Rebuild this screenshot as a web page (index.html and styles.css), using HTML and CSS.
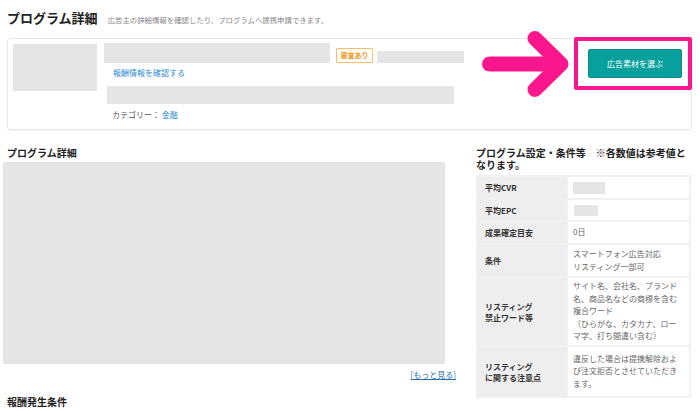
FILE: index.html
```html
<!DOCTYPE html>
<html lang="ja">
<head>
    <meta charset="UTF-8">
    <meta name="viewport" content="width=device-width, initial-scale=1.0">
    <title>プログラム詳細</title>
    <link rel="stylesheet" href="styles.css">
</head>
<body>
    <header class="page-head">
        <h1>プログラム詳細</h1>
        <p class="lead">広告主の詳細情報を確認したり、プログラムへ提携申請できます。</p>
    </header>

    <section class="card">
        <div class="thumb"></div>
        <div class="info">
            <div class="name-row">
                <div class="ph ph-name"></div>
                <span class="badge">審査あり</span>
                <div class="ph ph-id"></div>
            </div>
            <a class="link reward-link" href="#">報酬情報を確認する</a>
            <div class="ph ph-desc"></div>
            <p class="category">カテゴリー： <a class="link" href="#">金融</a></p>
        </div>
        <button class="select-btn" type="button">広告素材を選ぶ</button>

        <!-- annotation -->
        <div class="highlight"></div>
        <svg class="arrow" width="100" height="72" viewBox="0 0 100 72">
            <g fill="none" stroke="#fa168c" stroke-width="15" stroke-linecap="round" stroke-linejoin="round">
                <path d="M15.5 36H85"/>
                <path d="M61 10.5L87 36L61 61.5"/>
            </g>
        </svg>
    </section>

    <div class="columns">
        <div class="col-main">
            <h2 class="sec-title">プログラム詳細</h2>
            <div class="ph ph-body"></div>
            <div class="more"><a class="link" href="#">[もっと見る]</a></div>
            <h2 class="sec-title reward-title">報酬発生条件</h2>
        </div>
        <div class="col-side">
            <h2 class="sec-title side-title">プログラム設定・条件等　※各数値は参考値となります。</h2>
            <table class="spec">
                <tr class="r-cvr">
                    <th>平均CVR</th>
                    <td><div class="ph ph-cvr"></div></td>
                </tr>
                <tr class="r-epc">
                    <th>平均EPC</th>
                    <td><div class="ph ph-epc"></div></td>
                </tr>
                <tr class="r-days">
                    <th>成果確定目安</th>
                    <td>0日</td>
                </tr>
                <tr class="r-cond">
                    <th>条件</th>
                    <td>スマートフォン広告対応<br>リスティング一部可</td>
                </tr>
                <tr class="r-ng">
                    <th>リスティング<br>禁止ワード等</th>
                    <td>サイト名、会社名、ブランド<br>名、商品名などの商標を含む<br>複合ワード<br>（ひらがな、カタカナ、ロー<br>マ字、打ち間違い含む）</td>
                </tr>
                <tr class="r-note">
                    <th>リスティング<br>に関する注意点</th>
                    <td>違反した場合は提携解除およ<br>び注文拒否とさせていただき<br>ます。</td>
                </tr>
            </table>
        </div>
    </div>
</body>
</html>
```

FILE: styles.css
```css
body {
    margin: 0;
    font-family: "Noto Sans CJK JP", "Noto Sans", sans-serif;
    color: #333;
    background-color: #fff;
}
.page-head {
    display: flex;
    align-items: baseline;
    padding: 10px 7px 0;
}
.page-head h1 {
    margin: 0;
    font-size: 13px;
    line-height: 16px;
    font-weight: 700;
    color: #222;
}
.lead {
    margin: 0 0 0 10px;
    font-size: 7.4px;
    color: #888;
}
.link {
    color: #2d8bd2;
    text-decoration: none;
}
.ph {
    background-color: #e6e5e6;
}

/* card */
.card {
    position: relative;
    display: flex;
    align-items: flex-start;
    margin: 12px 8px 0 7px;
    padding: 5px 9px 8px 5px;
    border: 1px solid #e6e6e6;
    border-radius: 3px;
    box-shadow: 0 1px 1px rgba(0,0,0,0.04);
}
.thumb {
    width: 84px;
    height: 47px;
    background-color: #e6e5e6;
}
.info {
    margin-left: 7px;
    margin-top: -1px;
    display: flex;
    flex-direction: column;
    align-items: flex-start;
}
.name-row {
    display: flex;
    align-items: flex-end;
}
.ph-name {
    width: 226px;
    height: 20px;
}
.badge {
    margin-left: 6px;
    width: 37px;
    height: 15px;
    box-sizing: border-box;
    border: 1px solid #f7c067;
    border-radius: 1px;
    font-size: 7px;
    line-height: 13px;
    text-align: center;
    color: #f39a1f;
    font-weight: 700;
}
.ph-id {
    margin-left: 4px;
    width: 87px;
    height: 12px;
}
.reward-link {
    margin: 4px 0 0 9px;
    font-size: 8px;
    line-height: 12px;
}
.ph-desc {
    margin: 7px 0 0 3px;
    width: 347px;
    height: 18px;
}
.category {
    margin: 5px 0 0 8px;
    font-size: 8px;
    line-height: 12px;
    color: #555;
}
.select-btn {
    margin-left: auto;
    margin-top: 5px;
    width: 94px;
    height: 29px;
    padding: 0;
    border: 1px solid #0a8e89;
    border-radius: 2px;
    background-color: #07a09c;
    color: #fff;
    font-family: inherit;
    font-size: 8px;
}
.highlight {
    position: absolute;
    left: 566px;
    top: -2px;
    width: 118px;
    height: 53px;
    box-sizing: border-box;
    border: 4px solid #fa168c;
    border-radius: 2px;
}
.arrow {
    position: absolute;
    left: 466px;
    top: -11px;
}

/* lower columns */
.columns {
    display: flex;
    align-items: flex-start;
    gap: 20px;
    margin-top: 17px;
    padding-left: 3px;
}
.col-main {
    width: 453px;
}
.sec-title {
    margin: 0 0 0 4px;
    font-size: 10px;
    line-height: 12px;
    font-weight: 700;
    color: #222;
}
.ph-body {
    margin-top: 3px;
    width: 442px;
    height: 202px;
}
.more {
    margin-top: 5px;
    text-align: right;
    font-size: 8px;
    line-height: 12px;
}
.more .link {
    color: #2a6fa8;
    text-decoration: underline;
}
.reward-title {
    margin-top: 15px;
}
.col-side {
    width: 215px;
}
.side-title {
    margin: 0;
}
.spec {
    margin-top: 4px;
    width: 215px;
    border-collapse: collapse;
    border: 2px solid #f1f1f1;
    font-size: 8px;
}
.spec th,
.spec td {
    border: 2px solid #f1f1f1;
    vertical-align: middle;
}
.spec th {
    width: 81px;
    padding: 0 0 0 7px;
    background-color: #eeeeee;
    text-align: left;
    font-weight: 700;
    color: #333;
    line-height: 11px;
}
.spec td {
    padding: 0 4px 0 5px;
    color: #666;
    line-height: 12.5px;
    background-color: #fff;
    white-space: nowrap;
}
.r-cvr { height: 23px; }
.r-epc { height: 22px; }
.r-days { height: 23px; }
.r-cond { height: 33px; }
.r-ng { height: 69px; }
.r-note { height: 51px; }
.ph-cvr {
    width: 32px;
    height: 12px;
}
.ph-epc {
    width: 24px;
    height: 11px;
    margin-left: 1px;
}
```
